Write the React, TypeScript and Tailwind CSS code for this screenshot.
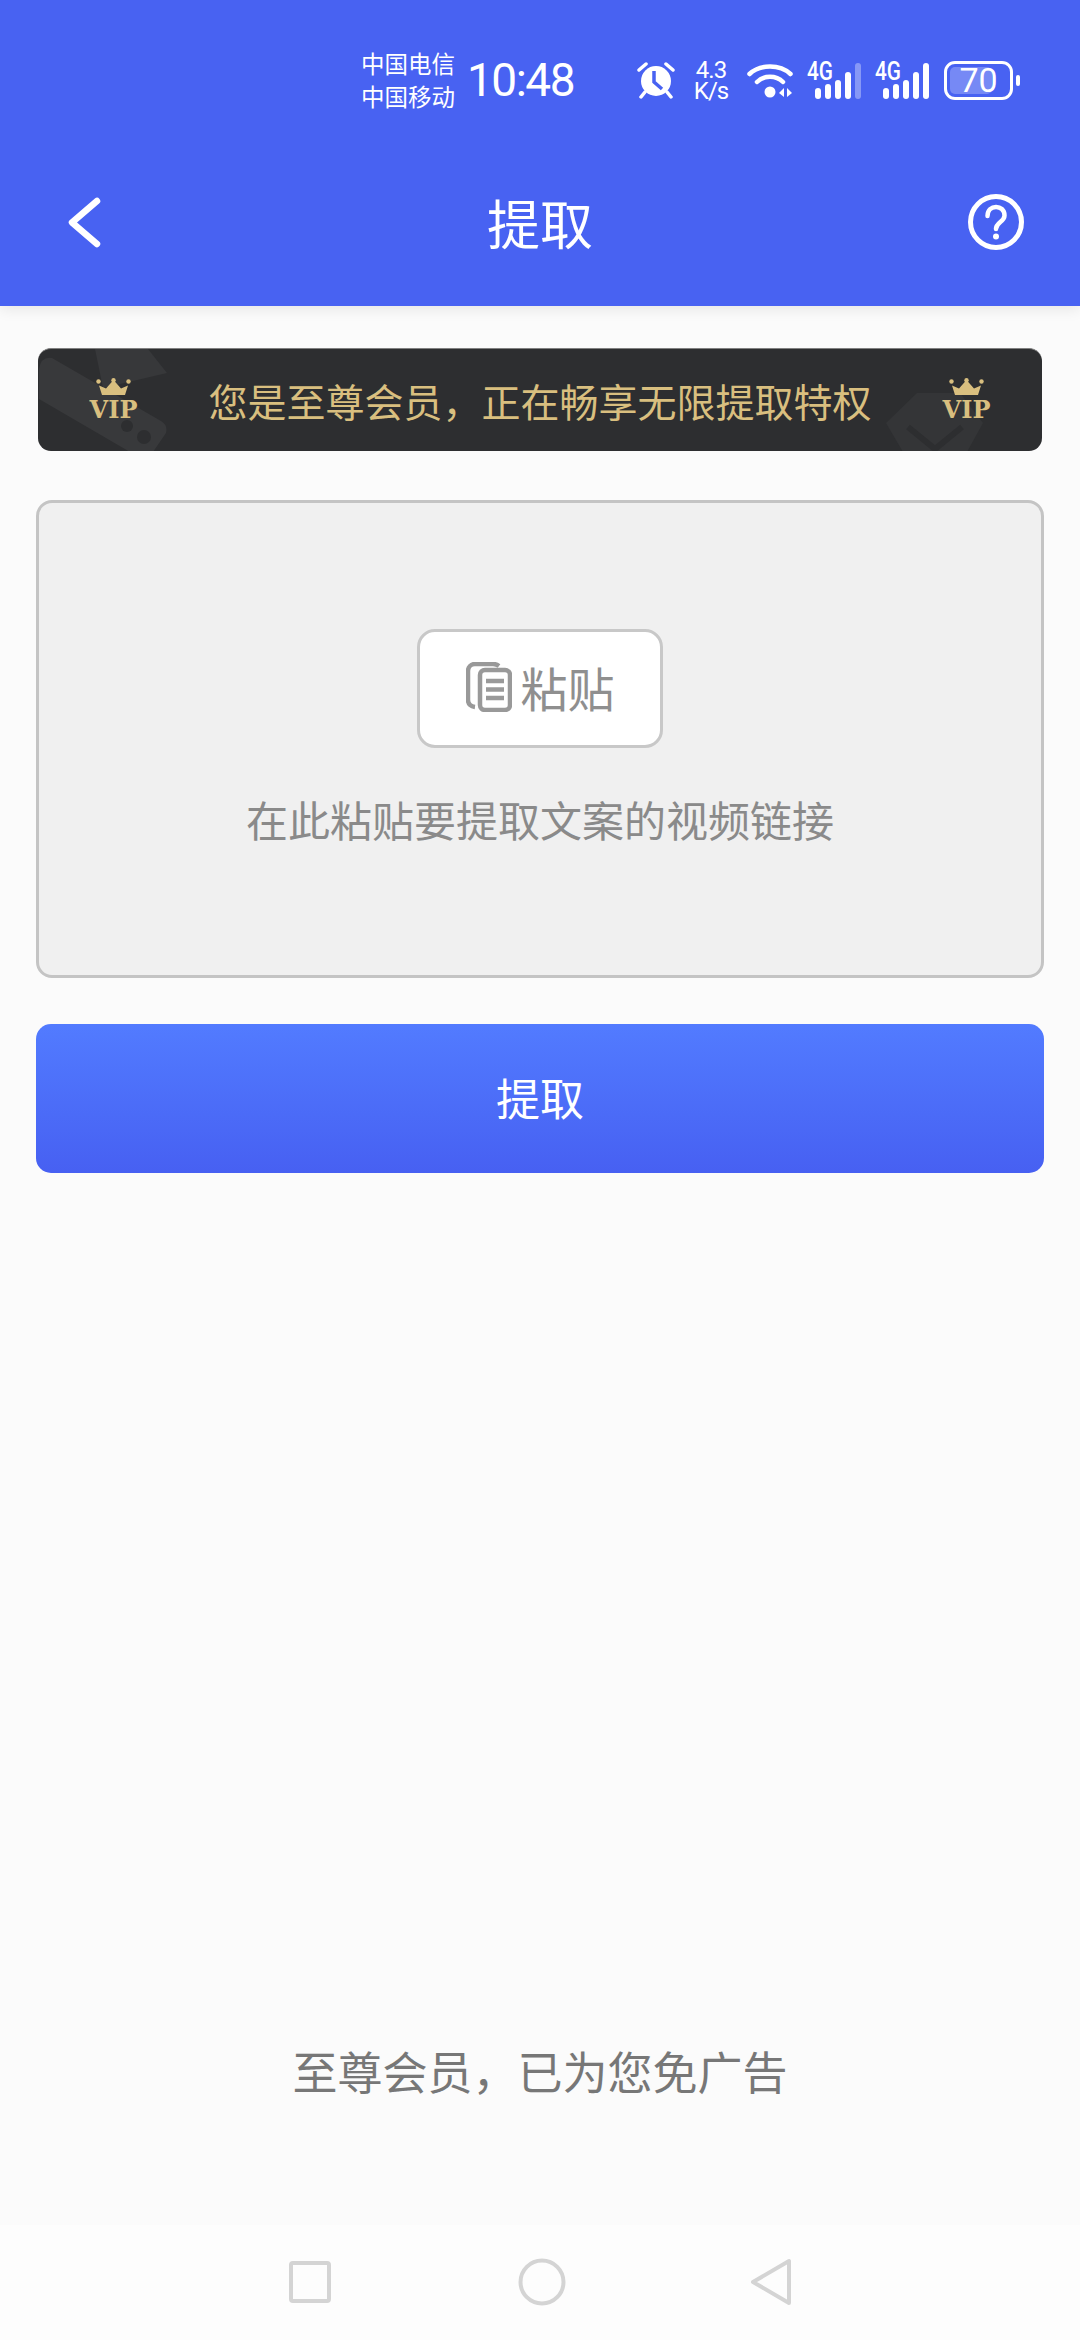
import React from 'react';

const CJK = 'font-["Noto_Sans_CJK_SC","Noto_Sans",sans-serif]';

function Alarm() {
  return (
    <svg width="38" height="38" viewBox="0 0 38 38" className="ml-[62px]">
      <path d="M2 9 L9 3" stroke="#fff" strokeWidth="3.500" strokeLinecap="round" />
      <path d="M36 9 L29 3" stroke="#fff" strokeWidth="3.500" strokeLinecap="round" />
      <path d="M8 31 L4 36" stroke="#fff" strokeWidth="3.500" strokeLinecap="round" />
      <path d="M30 31 L34 36" stroke="#fff" strokeWidth="3.500" strokeLinecap="round" />
      <circle cx="19" cy="20" r="15" fill="#fff" />
      <path d="M17 10 V21 L25 28" fill="none" stroke="#4862f2" strokeWidth="3.500" />
    </svg>
  );
}

function Wifi() {
  return (
    <svg width="46" height="36" viewBox="0 0 46 36" className="ml-[19px]">
      <path d="M2.500 12 C13 2 33 2 43.500 12" fill="none" stroke="#fff" strokeWidth="4.500" strokeLinecap="round" />
      <path d="M10 20 C17 13 29 13 36 20" fill="none" stroke="#fff" strokeWidth="4.500" strokeLinecap="round" />
      <circle cx="23" cy="30" r="5.500" fill="#fff" />
      <path d="M37 26 L32 31 L37 35 Z" fill="#fff" />
      <path d="M40 26 L45 31 L40 35 Z" fill="#fff" />
    </svg>
  );
}

function Signal({ weak }: { weak?: boolean }) {
  return (
    <svg width="54" height="44" viewBox="0 -7 54 44" className="ml-[14px] mt-[-7px]">
      <text x="0" y="18" fontFamily="Roboto, sans-serif" fontWeight="500" fontSize="25" fill="#fff" textLength="26" lengthAdjust="spacingAndGlyphs">4G</text>
      <rect x="8" y="26" width="6" height="11" rx="3" fill="#fff" />
      <rect x="18" y="22" width="6" height="15" rx="3" fill="#fff" />
      <rect x="28" y="18" width="6" height="19" rx="3" fill="#fff" />
      <rect x="38" y="10" width="6" height="27" rx="3" fill="#fff" />
      <rect x="48" y="1" width="6" height="36" rx="3" fill="#fff" fillOpacity={weak ? 0.35 : 1} />
    </svg>
  );
}

function Battery() {
  return (
    <div className="ml-[15px] flex items-center gap-[3px]">
      <div className="relative w-[69px] h-[39px] rounded-[11px] border-[3px] border-white p-[3px]">
        <div className="w-[42px] h-full rounded-[5px] bg-white/25" />
        <div className="absolute inset-0 flex items-center justify-center text-white text-[34px] leading-none font-['Roboto',sans-serif]">70</div>
      </div>
      <div className="w-[4px] h-[11px] rounded-full bg-white" />
    </div>
  );
}

function Vip() {
  return (
    <div className="flex flex-col items-center w-[47px] shrink-0">
      <svg width="35" height="17" viewBox="0 0 35 17">
        <path d="M6 17 L3 7.500 L10 10.500 L17.500 2 L25 10.500 L32 7.500 L29 17 Z" fill="#d9bf7f" />
        <circle cx="2.500" cy="3.500" r="2.200" fill="#d9bf7f" />
        <circle cx="17.500" cy="2.200" r="2.200" fill="#d9bf7f" />
        <circle cx="32.500" cy="3.500" r="2.200" fill="#d9bf7f" />
      </svg>
      <div className="mt-[2px] text-[#d9bf7f] text-[24px] leading-[25px] font-bold whitespace-nowrap font-['DejaVu_Serif',serif]">VIP</div>
    </div>
  );
}

function PasteIcon() {
  return (
    <svg width="46" height="50" viewBox="0 0 46 50">
      <path d="M33 4 C31 2.500 29 2 27 2 H9 C5 2 2 5 2 9 V38 C2 42 5 44.500 9 45" fill="none" stroke="#999" strokeWidth="4.500" />
      <rect x="14" y="8" width="30" height="40" rx="5" fill="#fff" stroke="#999" strokeWidth="4.500" />
      <path d="M20 19 H38 M20 27.500 H38 M20 36 H38" stroke="#999" strokeWidth="4.500" />
    </svg>
  );
}

export default function App() {
  return (
    <div className={`w-[1080px] h-[2340px] bg-[#fbfbfb] flex flex-col overflow-hidden ${CJK}`}>
      {/* Header */}
      <header className="h-[306px] shrink-0 bg-[#4862f2] shadow-[0_3px_14px_rgba(0,0,0,0.09)] relative z-10">
        <div className="h-[160px] pl-[361px] flex items-center text-white">
          <div className="w-[94px] text-[23.500px] leading-[33px]">
            <div>中国电信</div>
            <div>中国移动</div>
          </div>
          <div className="ml-[12px] w-[108px] text-[46px] leading-[52px] tracking-[-1.500px] whitespace-nowrap font-['Roboto',sans-serif]">10:48</div>
          <Alarm />
          <div className="ml-[19px] w-[34px] flex flex-col items-center text-[24px] leading-[21px] mt-[1px] tracking-[-1px] font-['Roboto',sans-serif]">
            <div>4.3</div>
            <div className="whitespace-nowrap">K/s</div>
          </div>
          <Wifi />
          <Signal weak />
          <Signal />
          <Battery />
        </div>
        <div className="h-[124px] px-[56px] flex items-center justify-between text-white">
          <svg width="56" height="56" viewBox="0 0 56 56">
            <path d="M41 7 L16 28.500 L41 50" fill="none" stroke="#fff" strokeWidth="6.500" strokeLinecap="round" strokeLinejoin="round" />
          </svg>
          <div className="text-[53px] leading-none">提取</div>
          <svg width="56" height="56" viewBox="0 0 56 56">
            <circle cx="28" cy="28" r="25.500" fill="none" stroke="#fff" strokeWidth="5" />
            <path d="M19.500 22 C19.500 10 36.500 10 36.500 21.500 C36.500 28 28 28 28 35" fill="none" stroke="#fff" strokeWidth="4.500" strokeLinecap="round" />
            <circle cx="28" cy="42.500" r="3" fill="#fff" />
          </svg>
        </div>
      </header>

      {/* Content */}
      <main className="flex-1 flex flex-col px-[36px] pt-[42px]">
        <div className="relative mx-[2px] h-[103px] shrink-0 rounded-[13px] overflow-hidden bg-[#2d2e30] border-t border-[#808080] flex items-center justify-between px-[52px]">
          <svg width="1004" height="103" viewBox="0 0 1004 103" className="absolute left-0 top-0">
            <path d="M57 0 H110 L129 24 L65 39 Z" fill="#37383a" />
            <path d="M14 9 L123 72 Q130 76 128 84 L115 103 H92 L1 50 V20 Q3 7 14 9 Z" fill="#38393b" />
            <circle cx="89" cy="77" r="6" fill="#2d2e30" />
            <circle cx="106" cy="88" r="7" fill="#2d2e30" />
            <path d="M879 44 H922 L945 74 L929 103 H865 L848 74 Z" fill="#343537" />
            <path d="M870 78 L897 100 L924 78" fill="none" stroke="#2d2e30" strokeWidth="6" />
          </svg>
          <div className="relative"><Vip /></div>
          <div className="relative text-[39px] leading-none text-[#d9bf7f] whitespace-nowrap">您是至尊会员，正在畅享无限提取特权</div>
          <div className="relative"><Vip /></div>
        </div>

        <div className="mt-[49px] h-[478px] shrink-0 rounded-[16px] border-[3px] border-[#c4c4c4] bg-[#f0f0f0] flex flex-col items-center pt-[126px]">
          <button className="w-[246px] h-[119px] pb-[4px] rounded-[18px] border-[3px] border-[#c8c8c8] bg-white flex items-center justify-center gap-[9px] text-[#8f8f8f] text-[47px] leading-none">
            <PasteIcon />
            <span>粘贴</span>
          </button>
          <p className="mt-[46px] text-[42px] leading-[50px] text-[#8a8a8a] whitespace-nowrap">在此粘贴要提取文案的视频链接</p>
        </div>

        <button className="mt-[46px] h-[149px] pb-[4px] shrink-0 rounded-[15px] bg-gradient-to-b from-[#527bff] to-[#4760f2] text-white text-[44px] leading-none">提取</button>

        <p className="mt-auto mb-[126px] text-center text-[45px] leading-[56px] text-[#777777] whitespace-nowrap">至尊会员，已为您免广告</p>
      </main>

      {/* Navigation bar */}
      <nav className="h-[115px] shrink-0 bg-[#fdfdfd] flex items-start justify-center pt-[33px]">
        <svg width="44" height="48" viewBox="0 0 44 48">
          <rect x="3" y="5" width="38" height="38" rx="2" fill="none" stroke="#d4d4d4" strokeWidth="4" />
        </svg>
        <svg width="48" height="48" viewBox="0 0 48 48" className="ml-[186px]">
          <circle cx="24" cy="24" r="21.500" fill="none" stroke="#d4d4d4" strokeWidth="4" />
        </svg>
        <svg width="42" height="48" viewBox="0 0 42 48" className="ml-[184px]">
          <path d="M39 3 V45 L3 24 Z" fill="none" stroke="#d4d4d4" strokeWidth="4" strokeLinejoin="round" />
        </svg>
      </nav>
    </div>
  );
}
